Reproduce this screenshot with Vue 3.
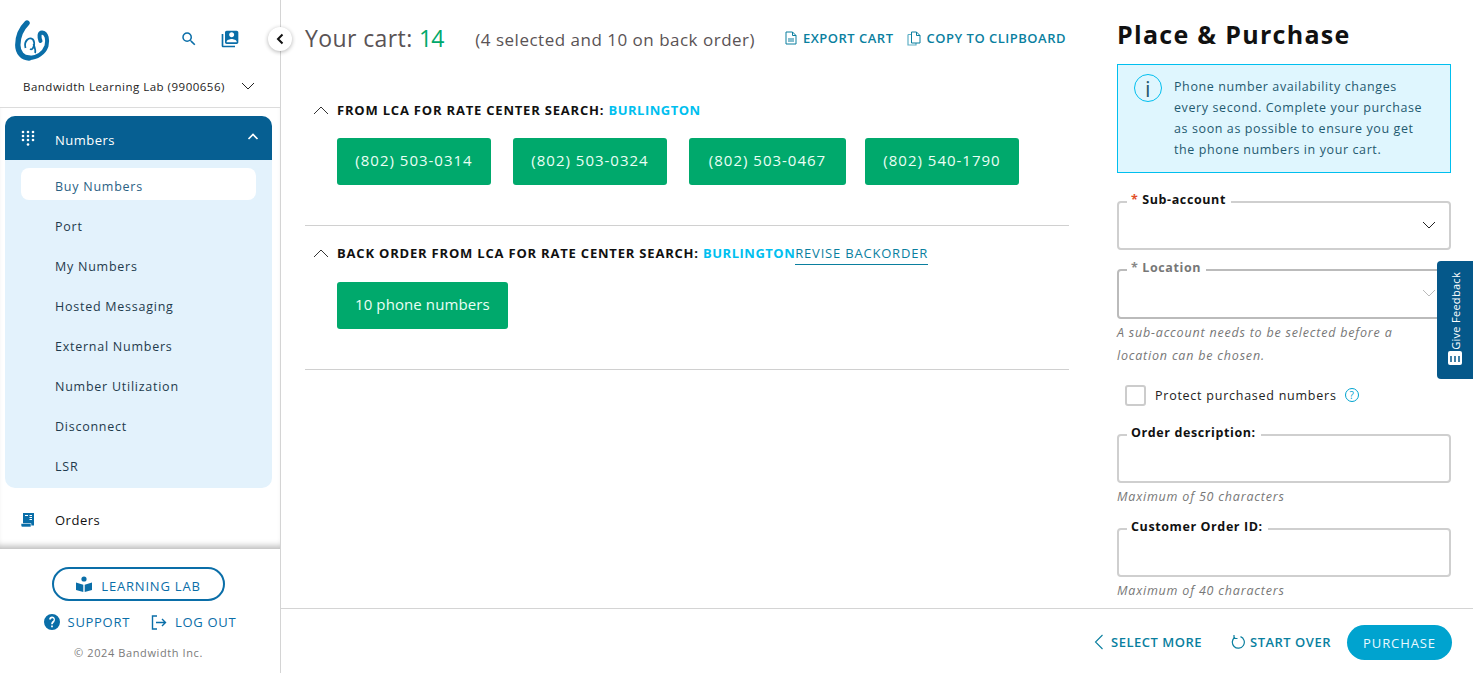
<script setup>
const subItems = ['Buy Numbers', 'Port', 'My Numbers', 'Hosted Messaging', 'External Numbers', 'Number Utilization', 'Disconnect', 'LSR']
const numbers = ['(802) 503-0314', '(802) 503-0324', '(802) 503-0467', '(802) 540-1790']
</script>

<template>
  <div class="app">
    <aside class="sidebar">
      <div class="side-head">
        <div class="head-top">
          <svg class="logo" viewBox="0 0 36 42" width="36" height="42">
            <path d="M12 3C7 8 2.800 16 2.800 25 2.800 33 8 38 14 38" fill="none" stroke="#0a6ea8" stroke-width="5.400" stroke-linecap="round"/>
            <path d="M14 38C22 38 29 33 31.500 26 33 20 32 13 27 12.500 24 12.500 24 17 25.500 21" fill="none" stroke="#0a6ea8" stroke-width="4" stroke-linecap="round"/>
            <path d="M10.500 28C8.500 21 14 16.500 18 19.500 20.500 23 18.500 31 15 29" fill="none" stroke="#0a6ea8" stroke-width="1.800"/>
            <path d="M18.500 24C20 28 21 31 20 33" fill="none" stroke="#0a6ea8" stroke-width="1.800"/>
          </svg>
          <div class="head-icons">
            <svg width="18" height="18" viewBox="0 0 24 24"><path d="M15.500 14h-.79l-.28-.27A6.470 6.470 0 0 0 16 9.500 6.500 6.500 0 1 0 9.500 16c1.610 0 3.090-.59 4.230-1.570l.27.28v.79l5 4.990L20.490 19l-4.990-5zm-6 0C7.010 14 5 11.990 5 9.500S7.010 5 9.500 5 14 7.010 14 9.500 11.990 14 9.500 14z" fill="#0a6ea8"/></svg>
            <svg width="20" height="20" viewBox="0 0 24 24"><path d="M4 6H2v14c0 1.100.9 2 2 2h14v-2H4V6zm16-4H8c-1.100 0-2 .9-2 2v12c0 1.100.9 2 2 2h12c1.100 0 2-.9 2-2V4c0-1.100-.9-2-2-2zm-6 2c1.660 0 3 1.340 3 3s-1.340 3-3 3-3-1.340-3-3 1.340-3 3-3zm6 12H8v-1c0-2 4-3.100 6-3.100s6 1.100 6 3.100v1z" fill="#0a6ea8"/></svg>
          </div>
        </div>
        <div class="account">
          <span>Bandwidth Learning Lab (9900656)</span>
          <svg width="14" height="8" viewBox="0 0 14 8"><path d="M1 1l6 6 6-6" fill="none" stroke="#222" stroke-width="1"/></svg>
        </div>
      </div>
      <nav class="nav">
        <div class="group">
          <div class="group-head">
            <svg class="pad" width="14" height="17" viewBox="0 0 14 17" fill="#fff">
              <circle cx="2" cy="2" r="1.300"/><circle cx="7" cy="2" r="1.300"/><circle cx="12" cy="2" r="1.300"/>
              <circle cx="2" cy="6" r="1.300"/><circle cx="7" cy="6" r="1.300"/><circle cx="12" cy="6" r="1.300"/>
              <circle cx="2" cy="10" r="1.300"/><circle cx="7" cy="10" r="1.300"/><circle cx="12" cy="10" r="1.300"/>
              <circle cx="7" cy="14.500" r="1.300"/>
            </svg>
            <span>Numbers</span>
            <svg class="up" width="12" height="7" viewBox="0 0 12 7"><path d="M1.500 6L6 1.500 10.500 6" fill="none" stroke="#fff" stroke-width="1.600"/></svg>
          </div>
          <ul class="sub">
            <li v-for="(s, i) in subItems" :key="s" :class="{ active: i === 0 }">{{ s }}</li>
          </ul>
        </div>
        <div class="nav-item">
          <svg width="16" height="16" viewBox="0 0 16 16"><path d="M3 1h11v12.500H3z" fill="#0a6ea8"/><path d="M1 11.500h10v3.500H2.500C1.500 15 1 14 1 13z" fill="#0a6ea8" stroke="#fff" stroke-width=".6"/><path d="M5 3.500h3M9.500 3.500h2.500M9.500 5.500h2.500M9.500 7.500h2.500" stroke="#fff" stroke-width="1"/></svg>
          <span>Orders</span>
        </div>
      </nav>
      <div class="side-foot">
        <button class="lab">
          <svg width="16" height="17" viewBox="0 0 16 17" fill="#0a6ea8"><circle cx="8" cy="3" r="2.600"/><path d="M0 6.500l7.300 2.300V16L0 14zM16 6.500L8.700 8.800V16l7.300-2z"/></svg>
          <span>LEARNING LAB</span>
        </button>
        <div class="foot-links">
          <a><svg width="16" height="16" viewBox="0 0 24 24"><path d="M12 0a12 12 0 1 0 0 24 12 12 0 0 0 0-24zm1.300 20h-2.600v-2.600h2.600zm2.700-8.500c-1 1-2.700 1.700-2.700 4h-2.600c0-3.400 1.700-4.300 2.900-5.400.7-.6 1-1.100 1-1.900 0-1.100-.9-2-2.100-2s-2.100.9-2.100 2H7.700c0-2.500 1.900-4.500 4.300-4.500s4.400 2 4.400 4.500c0 1.700-.4 2.800-1.400 3.800z" fill="#0a6ea8"/></svg>SUPPORT</a>
          <a><svg width="16" height="15" viewBox="0 0 16 15"><path d="M6 1H1.500v13H6M5 7.500h9.500M11 4l3.500 3.500L11 11" fill="none" stroke="#0a6ea8" stroke-width="1.400"/></svg>LOG OUT</a>
        </div>
        <div class="copy">© 2024 Bandwidth Inc.</div>
      </div>
    </aside>

    <button class="collapse" aria-label="Collapse">
      <svg width="8" height="12" viewBox="0 0 8 12"><path d="M6.500 1.500L2 6l4.500 4.500" fill="none" stroke="#111" stroke-width="2"/></svg>
    </button>

    <main class="main">
      <div class="body">
        <section class="cart">
          <header class="cart-head">
            <h1>Your cart: <b>14</b></h1>
            <span class="summary">(4 selected and 10 on back order)</span>
            <div class="cart-actions">
              <a><svg width="12" height="14" viewBox="0 0 12 14"><path d="M1 1h6.500L11 4.500V13H1zM7.500 1v3.500H11M3 8h6M3 10h6" fill="none" stroke="#0a7f9f" stroke-width="1"/></svg>EXPORT CART</a>
              <a><svg width="14" height="15" viewBox="0 0 14 15"><path d="M1 3.500h3M1 3.500V14h8v-2" fill="none" stroke="#5fb0c6" stroke-width="1.200"/><path d="M4.500 1h5L13 4.500V12H4.500zM9.500 1v3.500H13" fill="none" stroke="#0a7f9f" stroke-width="1"/></svg>COPY TO CLIPBOARD</a>
            </div>
          </header>

          <div class="block first">
            <h2>
              <svg width="16" height="9" viewBox="0 0 16 9"><path d="M1 8l7-7 7 7" fill="none" stroke="#333" stroke-width="1"/></svg>
              FROM LCA FOR RATE CENTER SEARCH:&nbsp;<em>BURLINGTON</em>
            </h2>
            <div class="chips">
              <div v-for="n in numbers" :key="n" class="chip">{{ n }}</div>
            </div>
          </div>

          <div class="block">
            <h2>
              <svg width="16" height="9" viewBox="0 0 16 9"><path d="M1 8l7-7 7 7" fill="none" stroke="#333" stroke-width="1"/></svg>
              BACK ORDER FROM LCA FOR RATE CENTER SEARCH:&nbsp;<em>BURLINGTON</em><a class="revise">REVISE BACKORDER</a>
            </h2>
            <div class="chips">
              <div class="chip count">10 phone numbers</div>
            </div>
          </div>
        </section>

        <section class="panel">
          <h2 class="panel-title">Place &amp; Purchase</h2>
          <div class="info">
            <span class="info-i">i</span>
            <p>Phone number availability changes every second. Complete your purchase as soon as possible to ensure you get the phone numbers in your cart.</p>
          </div>

          <fieldset class="field select">
            <legend><i>*</i> Sub-account</legend>
            <svg width="14" height="8" viewBox="0 0 14 8"><path d="M1 1l6 6 6-6" fill="none" stroke="#222" stroke-width="1"/></svg>
          </fieldset>

          <fieldset class="field select disabled">
            <legend><i>*</i> Location</legend>
            <svg width="14" height="8" viewBox="0 0 14 8"><path d="M1 1l6 6 6-6" fill="none" stroke="#bbb" stroke-width="1"/></svg>
          </fieldset>
          <p class="hint wrap">A sub-account needs to be selected before a location can be chosen.</p>

          <label class="protect">
            <span class="box"></span>
            <span>Protect purchased numbers</span>
            <span class="q">?</span>
          </label>

          <fieldset class="field plain">
            <legend>Order description:</legend>
          </fieldset>
          <p class="hint">Maximum of 50 characters</p>

          <fieldset class="field plain second">
            <legend>Customer Order ID:</legend>
          </fieldset>
          <p class="hint">Maximum of 40 characters</p>
        </section>
      </div>

      <footer class="foot">
        <a><svg width="10" height="16" viewBox="0 0 10 16"><path d="M8.500 1L1.500 8l7 7" fill="none" stroke="#0a7f9f" stroke-width="1.100"/></svg>SELECT MORE</a>
        <a class="over"><svg width="14" height="15" viewBox="0 0 14 15"><path d="M4 3.200A6 6 0 1 0 9.500 2.600" fill="none" stroke="#0a7f9f" stroke-width="1.200"/><path d="M3 1v3.500h3.500" fill="none" stroke="#0a7f9f" stroke-width="1.200"/></svg>START OVER</a>
        <button class="purchase">PURCHASE</button>
      </footer>
    </main>

    <aside class="feedback">
      <span>Give Feedback</span>
      <svg width="14" height="14" viewBox="0 0 14 14"><rect width="14" height="14" rx="2" fill="#fff"/><path d="M3 5v6M7 5v6M11 5v6" stroke="#05588a" stroke-width="1.500"/></svg>
    </aside>
  </div>
</template>

<style scoped>
* { box-sizing: border-box; }
.app {
  position: relative;
  display: flex;
  width: 1473px;
  height: 673px;
  overflow: hidden;
  background: #fff;
  color: #111;
  font-family: "Open Sans", "Noto Sans", sans-serif;
}
.sidebar {
  flex: 0 0 281px;
  height: 673px;
  display: flex;
  flex-direction: column;
  border-right: 1px solid #d4d4d4;
}
.side-head { height: 108px; border-bottom: 1px solid #dcdcdc; flex: none; }
.head-top { display: flex; justify-content: space-between; align-items: center; padding: 20px 40px 0 15px; height: 62px; }
.head-icons { display: flex; gap: 22px; align-items: center; margin-top: -4px; }
.logo { display: block; }
.account {
  display: flex; justify-content: space-between; align-items: center;
  padding: 0 25px 0 23px; margin-top: 12px;
  font-size: 11.500px; letter-spacing: .5px; color: #1c1c1c;
  height: 24px;
}
.nav { flex: 1; padding: 8px 8px 0 5px; overflow: hidden; box-shadow: inset 0 -7px 6px -4px #bbb; }
.group { border-radius: 10px; overflow: hidden; background: #e3f2fc; }
.group-head {
  height: 44px; background: #065f92; color: #fff; display: flex; align-items: center;
  padding: 4px 13px 0 16px; font-size: 13px; letter-spacing: .5px;
}
.group-head .pad { margin-top: -4px; margin-right: 20px; }
.group-head .up { margin-left: auto; margin-top: -8px; }
.sub { list-style: none; margin: 0; padding: 8px 16px 0; }
.sub li {
  height: 32px; margin-bottom: 8px; padding-left: 34px; line-height: 38px; font-size: 12.500px;
  letter-spacing: .75px; color: #1f3b4d; border-radius: 8px;
}
.sub li.active { background: #fff; color: #2a6184; }
.nav-item { display: flex; align-items: center; height: 64px; padding: 0 0 0 15px; gap: 19px; font-size: 13px; letter-spacing: .5px; }
.side-foot { flex: none; height: 124px; display: flex; flex-direction: column; align-items: center; padding: 18px 3px 0 0; }
.lab {
  width: 173px; height: 34px; border: 2px solid #0a6ea8; border-radius: 17px; background: #fff;
  display: flex; align-items: center; justify-content: center; gap: 9px;
  color: #0a6ea8; font: inherit; font-size: 13px; letter-spacing: .8px; padding: 0;
}
.lab span { padding-top: 3px; }
.foot-links { display: flex; gap: 21px; margin: 12px 0 0 3px; font-size: 13px; letter-spacing: .7px; color: #0a6ea8; }
.foot-links a { display: flex; align-items: center; gap: 8px; }
.copy { margin-top: 14px; font-size: 11px; letter-spacing: .6px; color: #7a7a7a; }
.collapse {
  position: absolute; left: 268px; top: 27px; width: 24px; height: 24px; border-radius: 50%;
  background: #fff; border: 0; box-shadow: 0 1px 4px rgba(0,0,0,.3); padding: 0;
  display: flex; align-items: center; justify-content: center;
}
.main { flex: 1; min-width: 0; display: flex; flex-direction: column; height: 673px; }
.body { height: 608px; display: flex; overflow: hidden; flex: none; }
.cart { width: 812px; padding-left: 24px; flex: none; }
.cart-head { display: flex; align-items: center; height: 76px; width: 761px; }
.cart-head h1 { margin: 0; font-weight: 400; font-size: 23px; letter-spacing: .4px; color: #5a5355; white-space: nowrap; }
.cart-head h1 b { font-weight: 400; color: #00a86b; letter-spacing: -1px; }
.summary { margin: 3px 0 0 32px; font-size: 17px; letter-spacing: .5px; color: #5a5355; white-space: nowrap; }
.cart-actions { margin-left: auto; display: flex; gap: 13px; font-size: 13px; font-weight: 600; letter-spacing: .5px; color: #0a7f9f; }
.cart-actions a { display: flex; align-items: center; gap: 6px; white-space: nowrap; }
.block { border-bottom: 1px solid #d0d0d0; width: 764px; height: 144px; padding-top: 17px; }
.block.first { height: 150px; padding-top: 24px; }
.block h2 { margin: 0 0 19px; display: flex; align-items: center; height: 20px; font-size: 13px; font-weight: 700; letter-spacing: .8px; padding-left: 8px; color: #111; white-space: nowrap; }
.block.first h2 { margin-bottom: 18px; }
.block h2 svg { margin-right: 8px; }
.block h2 em { font-style: normal; color: #00bfef; letter-spacing: .5px; }
.revise { font-weight: 400; color: #0a7f9f; border-bottom: 1px solid #0a7f9f; line-height: 19px; height: 21px; margin-top: 2px; }
.chips { display: flex; gap: 22px; padding-left: 32px; }
.chip { height: 47px; padding: 0 18px 3px; background: #00a96c; color: #eafff5; border-radius: 3px; display: flex; align-items: center; font-size: 15px; letter-spacing: 1px; min-width: 154px; justify-content: center; }
.chip:nth-child(3) { min-width: 157px; margin-right: -3px; }
.chip.count { letter-spacing: .1px; }
.panel { width: 334px; margin-left: 24px; flex: none; }
.panel-title { margin: 18px 0 13px; font-size: 25px; line-height: 33px; font-weight: 700; letter-spacing: 1.300px; color: #111; }
.info { height: 109px; border: 1px solid #00bfef; background: #dff6fe; display: flex; gap: 12px; padding: 11px 16px; color: #1f5a70; font-size: 12.500px; line-height: 21px; letter-spacing: .6px; }
.info p { margin: 0; width: 256px; }
.info-i { flex: none; width: 28px; height: 28px; border: 1px solid #00bfef; border-radius: 50%; text-align: center; line-height: 26px; font-size: 22px; margin-top: -2px; }
.field { margin: 0; border: 2px solid #cfcfcf; border-radius: 4px; padding: 0 8px; position: relative; min-inline-size: 0; }
.field legend { font-size: 12.500px; font-weight: 700; letter-spacing: .6px; padding: 0 5px 3px 4px; line-height: 16px; }
.field i { color: #e2502b; font-style: normal; }
.select { margin-top: 19px; height: 58px; }
.select svg { position: absolute; right: 13px; top: 10px; }
.select.disabled { margin-top: 10px; height: 59px; border-color: #bbb; }
.select.disabled legend { color: #777; }
.select.disabled i { color: #888; }
.hint { margin: 2px 0 0; font-size: 12.500px; font-style: italic; letter-spacing: .8px; color: #777; line-height: 23px; }
.hint.wrap { width: 300px; }
.protect { display: flex; align-items: center; gap: 9px; margin: 12px 0 0 8px; height: 32px; font-size: 12.500px; letter-spacing: .75px; color: #222; }
.box { width: 21px; height: 21px; border: 2px solid #ccc; border-radius: 3px; }
.q { width: 14px; height: 14px; border: 1px solid #00a3cf; border-radius: 50%; color: #00a3cf; font-size: 10px; text-align: center; line-height: 12px; margin-left: -1px; letter-spacing: 0; }
.plain { margin-top: 14px; height: 58px; }
.plain.second { margin-top: 11px; }
.foot { flex: 1; border-top: 1px solid #d4d4d4; display: flex; align-items: center; justify-content: flex-end; padding: 3px 21px 0 0; font-size: 13px; font-weight: 600; letter-spacing: .5px; color: #0a7f9f; gap: 16px; }
.foot a { display: flex; align-items: center; gap: 7px; margin-top: -2px; }
.foot a.over { margin-left: 13px; gap: 5px; }
.purchase { width: 105px; height: 35px; border: 0; border-radius: 18px; background: #00a3cf; color: #eaf9ff; font: inherit; font-size: 13px; font-weight: 400; letter-spacing: .9px; padding: 0; }
.feedback {
  position: absolute; right: 0; top: 261px; width: 36px; height: 118px; background: #05588a;
  border-radius: 4px 0 0 4px; display: flex; flex-direction: column; align-items: center; justify-content: flex-end; gap: 1px;
  padding: 0 0 14px; color: #fff;
}
.feedback span { writing-mode: vertical-rl; transform: rotate(180deg); font-size: 11px; letter-spacing: .3px; white-space: nowrap; }
</style>

<style>
html, body { margin: 0; padding: 0; }
</style>
